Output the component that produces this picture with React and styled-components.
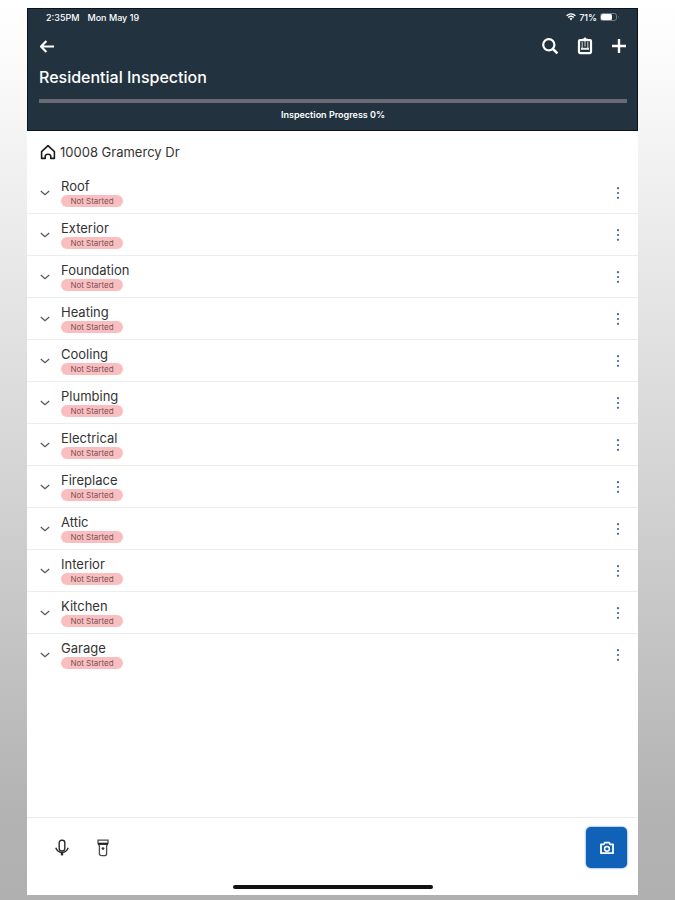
import styled, { createGlobalStyle } from "styled-components";

const sections = [
    "Roof",
    "Exterior",
    "Foundation",
    "Heating",
    "Cooling",
    "Plumbing",
    "Electrical",
    "Fireplace",
    "Attic",
    "Interior",
    "Kitchen",
    "Garage",
];

function App() {
    return (
        <Page>
            <GlobalStyle />
            <Screen>
                <Header>
                    <StatusBar>
                        <span>2:35PM</span>
                        <span>Mon May 19</span>
                        <StatusRight>
                            <WifiIcon />
                            <span>71%</span>
                            <BatteryIcon />
                        </StatusRight>
                    </StatusBar>

                    <Toolbar>
                        <IconButton aria-label="Back">
                            <BackIcon />
                        </IconButton>
                        <Actions>
                            <IconButton aria-label="Search">
                                <SearchIcon />
                            </IconButton>
                            <IconButton aria-label="Report">
                                <ClipboardIcon />
                            </IconButton>
                            <IconButton aria-label="Add">
                                <PlusIcon />
                            </IconButton>
                        </Actions>
                    </Toolbar>

                    <Title>Residential Inspection</Title>
                    <Progress id="progress" value={0} max={100} />
                    <ProgressLabel htmlFor="progress">
                        Inspection Progress 0%
                    </ProgressLabel>
                </Header>

                <Address>
                    <HomeIcon />
                    <span>10008 Gramercy Dr</span>
                </Address>

                <List>
                    {sections.map((name) => (
                        <Row key={name}>
                            <IconButton aria-label={`Expand ${name}`}>
                                <ChevronIcon />
                            </IconButton>
                            <RowText>
                                <Name>{name}</Name>
                                <Badge>Not Started</Badge>
                            </RowText>
                            <IconButton aria-label={`${name} options`}>
                                <DotsIcon />
                            </IconButton>
                        </Row>
                    ))}
                </List>

                <Footer>
                    <Tools>
                        <IconButton aria-label="Record a note">
                            <MicIcon />
                        </IconButton>
                        <IconButton aria-label="Flashlight">
                            <FlashlightIcon />
                        </IconButton>
                        <CameraButton aria-label="Take a photo">
                            <CameraIcon />
                        </CameraButton>
                    </Tools>
                    <HomeBar />
                </Footer>
            </Screen>
        </Page>
    );
}

export default App;

/* Icons */
const WifiIcon = () => (
    <svg width="10" height="8" viewBox="0 0 10 8" fill="none" stroke="#fff">
        <path d="M0.6 2.8C3.2 0.4 6.8 0.4 9.4 2.8" strokeWidth="1.4" />
        <path d="M2.2 4.5C3.8 3.1 6.2 3.1 7.8 4.5" strokeWidth="1.3" />
        <path d="M3.5 5.4L5 7.4L6.5 5.4Q5 4.4 3.5 5.4Z" fill="#fff" stroke="none" />
    </svg>
);

const BatteryIcon = () => (
    <svg width="20" height="8" viewBox="0 0 20 8" fill="none">
        <rect x="0.5" y="0.5" width="16" height="7" rx="2" stroke="#71808a" />
        <rect x="1" y="1" width="11" height="6" rx="1.5" fill="#fff" />
        <path d="M18 2.5Q19.5 4 18 5.5Z" fill="#71808a" />
    </svg>
);

const BackIcon = () => (
    <svg width="16" height="16" viewBox="0 0 16 16" fill="none" stroke="#fff" strokeWidth="2.2">
        <path d="M15 8.5H2.5M7.4 3L2 8.5L7.4 14" strokeLinejoin="round" />
    </svg>
);

const SearchIcon = () => (
    <svg width="18" height="18" viewBox="0 0 18 18" fill="none" stroke="#fff" strokeWidth="2.2">
        <circle cx="7.8" cy="7.8" r="5.6" />
        <path d="M11.8 11.8L16.4 16.4" strokeWidth="2.6" />
    </svg>
);

const ClipboardIcon = () => (
    <svg width="16" height="18" viewBox="0 0 16 18" fill="none" stroke="#fff">
        <rect x="2" y="3.1" width="12" height="13" rx="1" strokeWidth="2.2" />
        <path d="M5.4 3.5V2H6.6Q8 -0.6 9.4 2H10.6V3.5Z" fill="#fff" />
        <path d="M5.2 5V11M8 4V9.5M10.8 5V11" strokeWidth="1" opacity="0.8" />
        <path d="M4 11.8H12" strokeWidth="2" opacity="0.9" />
    </svg>
);

const PlusIcon = () => (
    <svg width="16" height="16" viewBox="0 0 16 16" stroke="#fff" strokeWidth="2.4">
        <path d="M8 1V15M1 8H15" />
    </svg>
);

const HomeIcon = () => (
    <svg width="16" height="16" viewBox="0 0 16 16" fill="none" stroke="#1d1d1d" strokeWidth="1.6">
        <path d="M1.6 7.6L8 1.6L14.4 7.6V14.4H10.8V12.4Q10.8 10.2 8 10.2Q5.2 10.2 5.2 12.4V14.4H1.6Z" strokeLinejoin="round" />
    </svg>
);

const ChevronIcon = () => (
    <svg width="10" height="6" viewBox="0 0 10 6" fill="none" stroke="#555" strokeWidth="1.2">
        <path d="M0.8 1L5 4.8L9.2 1" />
    </svg>
);

const DotsIcon = () => (
    <svg width="4" height="14" viewBox="0 0 4 14" fill="#3f5fa6">
        <circle cx="2" cy="2.2" r="1.1" />
        <circle cx="2" cy="7" r="1.1" />
        <circle cx="2" cy="11.8" r="1.1" />
    </svg>
);

const MicIcon = () => (
    <svg width="14" height="18" viewBox="0 0 14 18" fill="none" stroke="#2a2a2a" strokeWidth="1.4">
        <rect x="4.2" y="1.2" width="5.6" height="10.8" rx="2.4" />
        <path d="M0.8 8.8Q2.4 13.4 7 13.6Q11.6 13.4 13.2 8.8" />
        <path d="M7 13.6V16.4" strokeWidth="2.4" />
    </svg>
);

const FlashlightIcon = () => (
    <svg width="12" height="18" viewBox="0 0 12 18" fill="none" stroke="#4a4a4a" strokeWidth="1.3">
        <path d="M1 1.2H11V4.2L9.6 7V14.4Q9.6 16.6 7.4 16.6H4.6Q2.4 16.6 2.4 14.4V7L1 4.2Z" />
        <path d="M1 4.8H11" stroke="#222" strokeWidth="2.2" />
        <circle cx="6" cy="9.6" r="1.4" fill="#3a3a3a" stroke="none" />
    </svg>
);

const CameraIcon = () => (
    <svg width="14" height="14" viewBox="0 0 14 14" fill="none" stroke="#fff" strokeWidth="1.8">
        <path d="M1 3.4H3.8L4.8 1.6H9.2L10.2 3.4H13V12.2H1Z" strokeLinejoin="round" />
        <circle cx="7" cy="7.8" r="2.4" strokeWidth="1.5" />
    </svg>
);

const GlobalStyle = createGlobalStyle`
    * {
        box-sizing: border-box;
    }

    body {
        margin: 0;
        font-family: Inter, "Open Sans", sans-serif;
        color: #333;
    }
`;

const Page = styled.div`
    min-height: 100vh;
    display: flex;
    padding: 8px 37px 5px 27px;
    background: linear-gradient(#fff 0%, #fafafa 8%, #e4e4e4 34%, #c5c5c5 70%, #b3b3b3 90%, #b0b0b0 100%);
`;

const Screen = styled.main`
    flex: 1;
    display: flex;
    flex-direction: column;
    background: #fff;
`;

const Header = styled.header`
    display: flex;
    flex-direction: column;
    padding: 2px 10px 9px 11px;
    background: #22333f;
    border: 1px solid #0c141a;
    color: #fff;
`;

const StatusBar = styled.div`
    display: flex;
    align-items: center;
    gap: 8px;
    height: 12px;
    padding: 0 7px;
    font-size: 9px;
    font-weight: 500;
`;

const StatusRight = styled.div`
    display: flex;
    align-items: center;
    gap: 3px;
    margin-left: auto;
`;

const Toolbar = styled.div`
    display: flex;
    align-items: center;
    justify-content: space-between;
    height: 46px;
`;

const Actions = styled.div`
    display: flex;
    align-items: center;
    gap: 18px;
`;

const IconButton = styled.button`
    display: flex;
    align-items: center;
    justify-content: center;
    padding: 0;
    border: 0;
    background: none;
    cursor: pointer;
`;

const Title = styled.h1`
    margin: 0;
    font-size: 16px;
    line-height: 16px;
    font-weight: 500;
`;

const Progress = styled.progress`
    appearance: none;
    display: block;
    width: 100%;
    height: 4px;
    margin: 14px 0 6px;
    border: 0;
    background: #6a6a74;

    &::-webkit-progress-bar {
        background: #6a6a74;
    }

    &::-webkit-progress-value {
        background: #1061b8;
    }
`;

const ProgressLabel = styled.label`
    font-size: 9px;
    line-height: 12px;
    font-weight: 600;
    text-align: center;
`;

const Address = styled.div`
    display: flex;
    align-items: center;
    gap: 4px;
    height: 41px;
    padding: 0 13px;
    font-size: 13px;
`;

const List = styled.ul`
    flex: 1;
    margin: 0;
    padding: 0 0 16px;
    list-style: none;
`;

const Row = styled.li`
    display: flex;
    align-items: center;
    height: 42px;
    padding: 0 18px 0 13px;
    border-bottom: 1px solid #ededed;

    &:last-child {
        border-color: transparent;
    }
`;

const RowText = styled.div`
    flex: 1;
    display: flex;
    flex-direction: column;
    align-items: flex-start;
    margin-left: 11px;
`;

const Name = styled.span`
    font-size: 13px;
    line-height: 17px;
`;

const Badge = styled.span`
    width: 62px;
    border-radius: 6px;
    background: #f9bfc0;
    color: #7d5356;
    font-size: 8px;
    line-height: 12px;
    text-align: center;
`;

const Footer = styled.footer`
    display: flex;
    flex-direction: column;
    gap: 17px;
    padding: 9px 11px 6px 28px;
    border-top: 1px solid #ededed;
`;

const Tools = styled.div`
    display: flex;
    align-items: center;
    gap: 28px;
`;

const CameraButton = styled(IconButton)`
    width: 41px;
    height: 41px;
    margin-left: auto;
    border-radius: 5px;
    background: #1061b8;
    box-shadow: 0 0 2px #1061b8;
`;

const HomeBar = styled.div`
    width: 200px;
    height: 4px;
    margin-left: -17px;
    align-self: center;
    border-radius: 2px;
    background: #111;
`;
